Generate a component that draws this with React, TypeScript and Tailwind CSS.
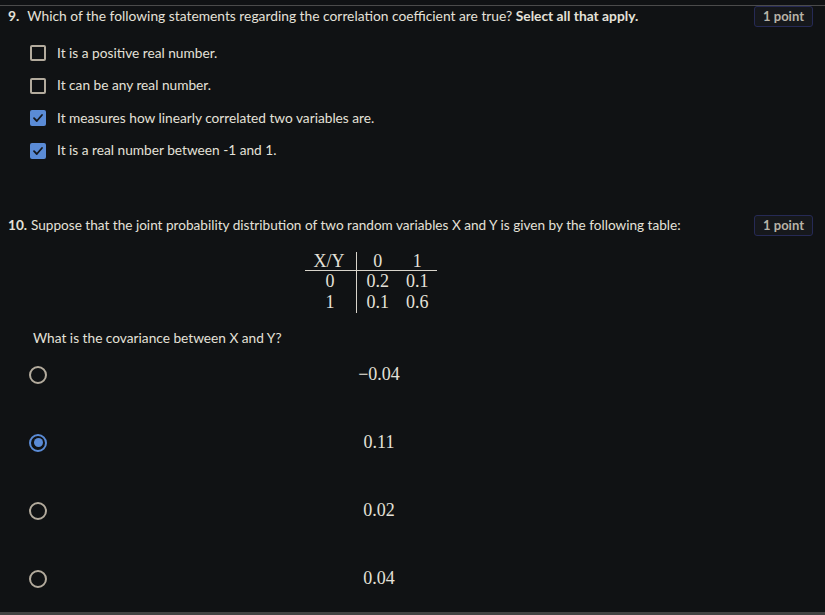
import React from 'react';

const sans = { fontFamily: 'Lato, "Noto Sans", sans-serif' };

function Badge() {
  return (
    <span className="shrink-0 rounded-[3px] border border-[#262a55] bg-[#16181c] px-[8px] text-[13px] font-bold leading-[19px] text-[#b8b3a8]">
      1 point
    </span>
  );
}

function Checkbox({ checked }: { checked: boolean }) {
  if (checked) {
    return (
      <span className="flex h-4 w-4 shrink-0 items-center justify-center rounded-[2px] bg-[#5a8bd6]">
        <svg width="12" height="12" viewBox="0 0 12 12" fill="none">
          <path d="M2 6.2 4.8 9 10 3" stroke="#15181d" strokeWidth="1.8" strokeLinecap="round" strokeLinejoin="round" />
        </svg>
      </span>
    );
  }
  return <span className="h-4 w-4 shrink-0 rounded-[2px] border-2 border-[#b3ab9d]" />;
}

function Radio({ checked }: { checked: boolean }) {
  if (checked) {
    return (
      <span className="flex h-[18px] w-[18px] shrink-0 items-center justify-center rounded-full border-2 border-[#5a8bd6]">
        <span className="h-[9px] w-[9px] rounded-full bg-[#5a8bd6]" />
      </span>
    );
  }
  return <span className="h-[18px] w-[18px] shrink-0 rounded-full border-2 border-[#b3ab9d]" />;
}

const statements = [
  { text: 'It is a positive real number.', checked: false },
  { text: 'It can be any real number.', checked: false },
  { text: 'It measures how linearly correlated two variables are.', checked: true },
  { text: 'It is a real number between -1 and 1.', checked: true },
];

const answers = [
  { value: '−0.04', checked: false },
  { value: '0.11', checked: true },
  { value: '0.02', checked: false },
  { value: '0.04', checked: false },
];

export default function App() {
  const math = { fontFamily: '"Liberation Serif", "DejaVu Serif", serif' };

  return (
    <div className="flex h-[615px] w-[825px] flex-col overflow-hidden bg-[#101214] text-[#e4e1d9]" style={sans}>
      <div className="mt-[5px] h-px bg-[#4b4b4b]" />

      {/* Question 9 */}
      <div className="flex items-start justify-between pl-2 pr-3">
        <p className="text-[13.8px] leading-5">
          <span className="mr-[8px] font-bold">9.</span>
          Which of the following statements regarding the correlation coefficient are true?{' '}
          <span className="font-bold">Select all that apply.</span>
        </p>
        <Badge />
      </div>

      <div className="mt-[16px] flex flex-col gap-[12.5px] pl-[30px]">
        {statements.map(s => (
          <label key={s.text} className="flex h-5 items-center gap-[11px] text-[13.7px]">
            <Checkbox checked={s.checked} />
            {s.text}
          </label>
        ))}
      </div>

      {/* Question 10 */}
      <div className="mt-[54px] flex items-start justify-between pl-2 pr-3">
        <p className="text-[13.6px] leading-5">
          <span className="mr-[4px] font-bold">10.</span>
          Suppose that the joint probability distribution of two random variables X and Y is given by the following table:
        </p>
        <Badge />
      </div>

      <div className="mt-[16px] flex justify-center pr-[84px]" style={math}>
        <table className="text-[18px] leading-[21px]">
          <tbody>
            <tr className="leading-[18px]">
              <td className="border-b border-r border-[#d8d4cb] pl-[9px] pr-[11px] text-center">X/Y</td>
              <td className="border-b border-[#d8d4cb] pl-[10px] pr-[8px] text-center">0</td>
              <td className="border-b border-[#d8d4cb] pl-[9px] pr-[8px] text-center">1</td>
            </tr>
            <tr>
              <td className="border-r border-[#d8d4cb] text-center">0</td>
              <td className="pl-[10px] pr-[8px] text-center">0.2</td>
              <td className="pl-[9px] pr-[8px] text-center">0.1</td>
            </tr>
            <tr>
              <td className="border-r border-[#d8d4cb] text-center">1</td>
              <td className="pl-[10px] pr-[8px] text-center">0.1</td>
              <td className="pl-[9px] pr-[8px] text-center">0.6</td>
            </tr>
          </tbody>
        </table>
      </div>

      <p className="mt-[15px] pl-[33px] text-[13.7px] leading-5">What is the covariance between X and Y?</p>

      <div className="mt-[17px] flex flex-col gap-[48px] pl-[29px]">
        {answers.map(a => (
          <label key={a.value} className="flex h-5 items-center">
            <Radio checked={a.checked} />
            <span className="w-[664px] text-center text-[18px]" style={math}>{a.value}</span>
          </label>
        ))}
      </div>

      <div className="mt-auto h-[3px] bg-[#424242]" />
    </div>
  );
}
